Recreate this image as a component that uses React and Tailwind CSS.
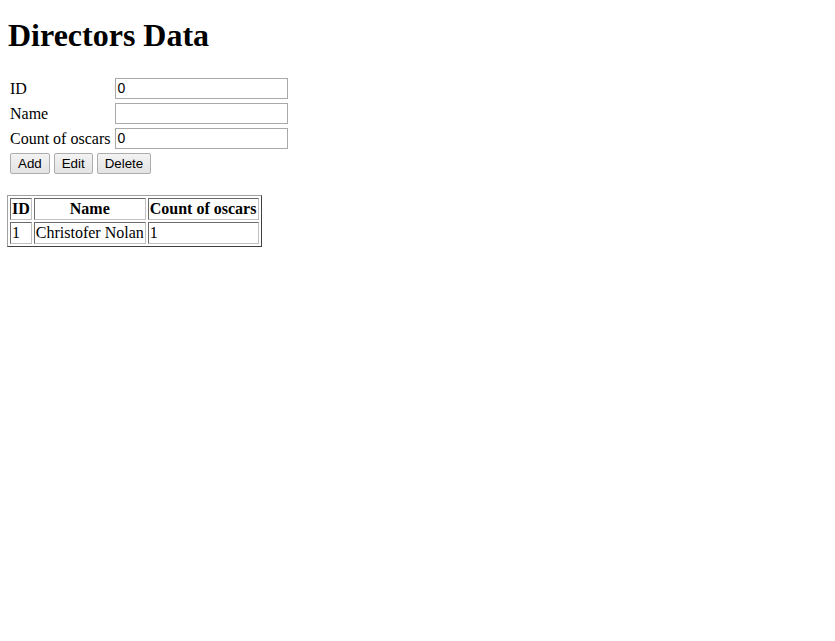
const serif = { fontFamily: '"Liberation Serif", "Times New Roman", serif' };

const fields = [
  { label: "ID", value: "0" },
  { label: "Name", value: "" },
  { label: "Count of oscars", value: "0" },
];

const directors = [{ id: 1, name: "Christofer Nolan", oscars: 1 }];

const Button = ({ children }) => (
  <button className="h-[21px] rounded-[2px] border border-[#adadad] bg-gradient-to-b from-[#f3f3f3] to-[#e3e3e3] px-[7px] text-[13.33px] leading-[17px] text-black font-['Liberation_Sans',Arial,sans-serif]">
    {children}
  </button>
);

const cell =
  "border border-t-[#6b6b6b] border-l-[#6b6b6b] border-b-[#c0c0c0] border-r-[#c0c0c0] p-[1px]";

export default function App() {
  return (
    <div className="min-h-screen bg-white px-2 pt-[17px] text-[16px] text-black" style={serif}>
      <h1 className="text-[32px] font-bold leading-[37px]">Directors Data</h1>

      <table className="mt-[21px] border-separate border-spacing-[2px]">
        <tbody>
          {fields.map((f) => (
            <tr key={f.label}>
              <td className="py-[1px] pl-0 pr-[2px] leading-[18px]">{f.label}</td>
              <td className="p-[1px]">
                <input
                  defaultValue={f.value}
                  className="block h-[21px] w-[173px] border border-[#a9a9a9] px-[1px] text-[14px] text-black font-['Liberation_Sans',Arial,sans-serif] outline-none"
                />
              </td>
            </tr>
          ))}
          <tr>
            <td colSpan={2} className="px-0 py-[1px]">
              <div className="flex gap-[4px]">
                <Button>Add</Button>
                <Button>Edit</Button>
                <Button>Delete</Button>
              </div>
            </td>
          </tr>
        </tbody>
      </table>

      <table className="mt-[18px] -ml-[1px] border-separate border-spacing-[2px] border border-t-[#a0a0a0] border-l-[#a0a0a0] border-b-[#404040] border-r-[#404040]">
        <thead>
          <tr>
            <th className={`${cell} font-bold leading-[18px]`}>ID</th>
            <th className={`${cell} font-bold leading-[18px]`}>Name</th>
            <th className={`${cell} pr-[2px] font-bold leading-[18px]`}>Count of oscars</th>
          </tr>
        </thead>
        <tbody>
          {directors.map((d) => (
            <tr key={d.id}>
              <td className={`${cell} leading-[18px]`}>{d.id}</td>
              <td className={`${cell} leading-[18px]`}>{d.name}</td>
              <td className={`${cell} leading-[18px]`}>{d.oscars}</td>
            </tr>
          ))}
        </tbody>
      </table>
    </div>
  );
}
